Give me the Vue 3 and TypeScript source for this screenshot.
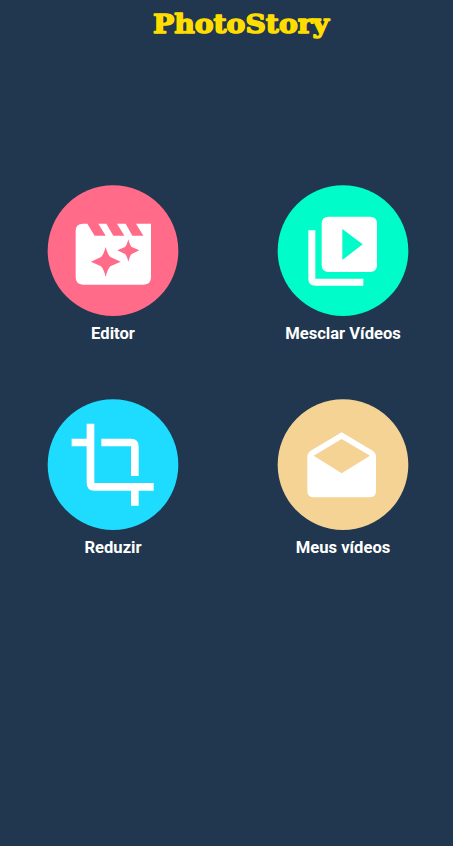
<script setup lang="ts">
interface Tile {
  label: string
  color: string
  paths: string[]
}

const tiles: Tile[] = [
  {
    label: 'Editor',
    color: '#ff6b88',
    paths: [
      'M129 136H142L164 172H197L175 136H199L220 172H253L231 136H257L277 172H310L288 136H333V297Q333 319 311 319H129Q107 319 107 297V158Q107 136 129 136ZM197 206Q190 231 183 236L153 250L183 264Q190 270 197 295Q204 270 211 264L242 250L211 236Q204 231 197 206ZM265 183Q260 202 255 206L232 216L255 227Q260 231 265 250Q270 231 275 227L298 216L275 206Q270 202 265 183Z',
    ],
  },
  {
    label: 'Mesclar Vídeos',
    color: '#00fcc8',
    paths: [
      'M176 115H300Q321 115 321 136V260Q321 281 300 281H176Q155 281 155 260V136Q155 115 176 115ZM217 152V245L278 198Z',
      'M115 156H136V301H280V322H136Q115 322 115 301Z',
    ],
  },
  {
    label: 'Reduzir',
    color: '#1edcff',
    paths: [
      'M140 94H163V272H341V295H296V340H273V295H163Q140 295 140 272V162H95V139H140Z',
      'M184 139H273Q296 139 296 162V251H273V162H184Z',
    ],
  },
  {
    label: 'Meus vídeos',
    color: '#f4d395',
    paths: [
      'M215 120L308 175Q318 182 318 193V295Q318 315 298 315H132Q112 315 112 295V193Q112 182 122 175ZM215 140L131 190L215 243L300 190Z',
    ],
  },
]
</script>

<template>
  <main class="screen">
    <header class="header">
      <h1 class="title">
        <svg class="wordmark" viewBox="0 0 180 44">
          <text x="1" y="33" textLength="176" lengthAdjust="spacingAndGlyphs">PhotoStory</text>
        </svg>
      </h1>
    </header>
    <nav class="menu">
      <button v-for="tile in tiles" :key="tile.label" class="tile" type="button">
        <svg class="badge" viewBox="21 20 396 396" aria-hidden="true">
          <circle cx="219" cy="217" r="196" :fill="tile.color" />
          <path v-for="d in tile.paths" :key="d" :d="d" fill="#fff" fill-rule="evenodd" />
        </svg>
        <span class="label">{{ tile.label }}</span>
      </button>
    </nav>
  </main>
</template>

<style>
body {
  background: #20374f;
}
</style>

<style scoped>
.screen {
  box-sizing: border-box;
  min-height: 846px;
  overflow: hidden;
  background: #20374f;
  font-family: Roboto, sans-serif;
}

.header {
  height: 185px;
  padding-left: 152px;
}

.title {
  margin: 0;
  line-height: 0;
}

.wordmark {
  width: 180px;
  height: 44px;
  overflow: visible;
}

.wordmark text {
  font-family: 'DejaVu Serif', serif;
  font-size: 26px;
  font-weight: 700;
  fill: #ffdd00;
  stroke: #ffdd00;
  stroke-width: 1.5px;
  stroke-linejoin: round;
}

.menu {
  display: grid;
  grid-template-columns: 230px 230px;
  grid-auto-rows: 214px;
  margin-left: -2px;
}

.tile {
  display: flex;
  flex-direction: column;
  align-items: center;
  padding: 0;
  border: 0;
  background: none;
  color: #fff;
  font: inherit;
}

.badge {
  flex: none;
  width: 132px;
  height: 132px;
}

.label {
  margin-top: 7px;
  font-size: 16.6px;
  font-weight: 700;
  line-height: 20px;
  white-space: nowrap;
}
</style>
